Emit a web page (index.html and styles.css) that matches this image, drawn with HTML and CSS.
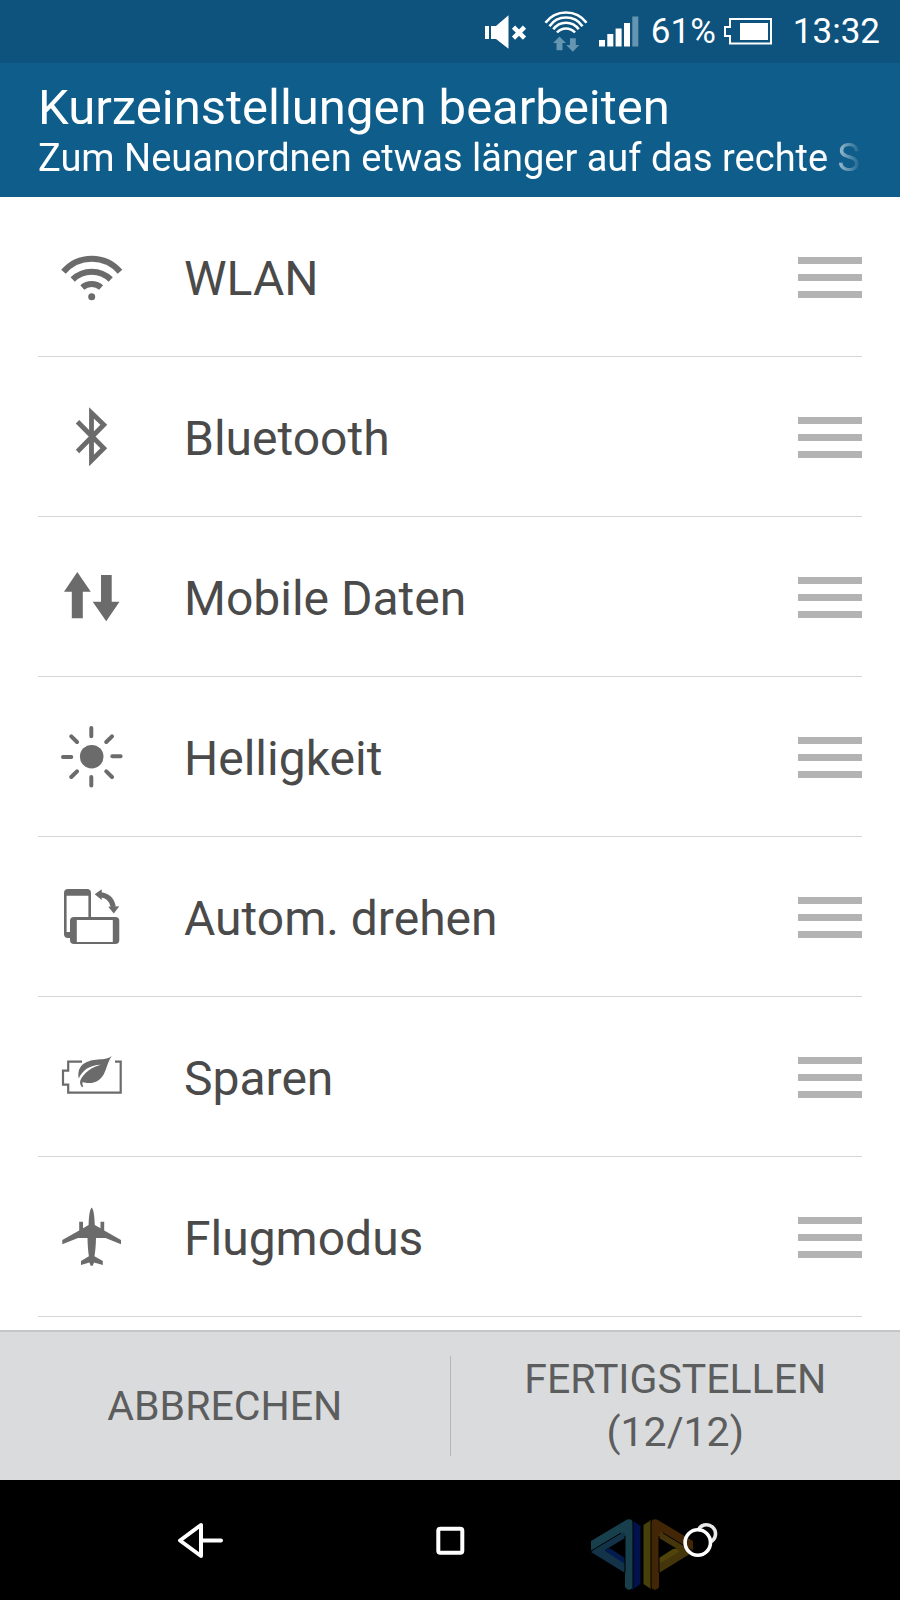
FILE: index.html
```html
<!DOCTYPE html>
<html lang="de">
<head>
<meta charset="utf-8">
<meta name="viewport" content="width=device-width, initial-scale=1">
<title>Kurzeinstellungen bearbeiten</title>
<link rel="stylesheet" href="styles.css">
</head>
<body>
<div class="screen">
  <div class="status">
    <svg class="status-mute" width="42" height="36" viewBox="0 0 42 36" aria-hidden="true">
      <path fill="#fff" d="M0 12h4v13H0zM6 12h5L23.500 1.300V34.700L11 25H6z"/>
      <path stroke="#fff" stroke-width="4.500" d="M28.500 13.200l11 11M39.500 13.200l-11 11"/>
    </svg>
    <svg class="status-wifi" width="44" height="43" viewBox="0 0 44 43" aria-hidden="true">
      <g fill="none" stroke="#fff" stroke-width="2.600">
        <path d="M1.500 12.800A25.500 25.500 0 0 1 42.500 12.800M5.500 16.200A20 20 0 0 1 38.500 16.200M9.300 19.300A15.500 15.500 0 0 1 34.700 19.300M13 22.500A12 12 0 0 1 31 22.500"/>
      </g>
      <path fill="#6595b0" d="M15.500 26.500L22 33h-3.500v7.200h-6V33H9zM26 28.300h5.800V35h3.500l-6.500 6.800L22.200 35H26z"/>
    </svg>
    <svg class="status-signal" width="40" height="31" viewBox="0 0 40 31" aria-hidden="true">
      <path fill="#fff" d="M0 24h6v6.500H0zM8.300 18h6v12.500h-6zM16.600 12.500h6v18h-6zM25 7h6v23.500h-6z"/>
      <path fill="#6595b0" d="M33.300 .5h6v30h-6z"/>
    </svg>
    <span class="status-level">61%</span>
    <svg class="status-battery" width="48" height="27" viewBox="0 0 48 27" aria-hidden="true">
      <path fill="none" stroke="#fff" stroke-width="2" d="M6 1h41v24.500H6v-7.500H1V9h5z"/>
      <path fill="#fff" d="M16 5h28v17H16z"/>
    </svg>
    <time class="status-time">13:32</time>
  </div>

  <header class="header">
    <h1 class="title">Kurzeinstellungen bearbeiten</h1>
    <p class="subtitle">Zum Neuanordnen etwas länger auf das rechte S</p>
  </header>

  <main class="content">
    <ul class="list">
      <li class="row">
        <svg class="icon" viewBox="0 0 64 64" aria-hidden="true">
          <path fill="none" stroke="#6b6b6b" stroke-width="6" d="M3.500 26.800A37 37 0 0 1 60 26.800M12.700 34.500A27 27 0 0 1 50.700 34.500M22.300 42.500A14.500 14.500 0 0 1 41.100 42.500"/>
          <circle cx="31.700" cy="51.700" r="3.500" fill="#6b6b6b"/>
        </svg>
        <span class="label">WLAN</span>
        <button class="handle" type="button" aria-label="WLAN verschieben"><span class="bar"></span><span class="bar"></span><span class="bar"></span></button>
      </li>
      <li class="row">
        <svg class="icon" viewBox="0 0 64 64" aria-hidden="true">
          <path fill="none" stroke="#6b6b6b" stroke-width="4.800" d="M17.500 16.800L43.800 43.200L31.500 55.500V8L43.800 19.800L17.500 46.500"/>
        </svg>
        <span class="label">Bluetooth</span>
        <button class="handle" type="button" aria-label="Bluetooth verschieben"><span class="bar"></span><span class="bar"></span><span class="bar"></span></button>
      </li>
      <li class="row">
        <svg class="icon" viewBox="0 0 64 64" aria-hidden="true">
          <path fill="#6b6b6b" d="M17.300 7L30.800 26.700h-8v26.600h-11V26.700H4zM41 10h10.700v26.700h7.800L46.200 56.200L32.700 36.700H41z"/>
        </svg>
        <span class="label">Mobile Daten</span>
        <button class="handle" type="button" aria-label="Mobile Daten verschieben"><span class="bar"></span><span class="bar"></span><span class="bar"></span></button>
      </li>
      <li class="row">
        <svg class="icon" viewBox="0 0 64 64" aria-hidden="true">
          <circle cx="31.700" cy="31.700" r="11.800" fill="#6b6b6b"/>
          <path stroke="#6b6b6b" stroke-width="4" stroke-linecap="round" d="M31.300 3v8.200M31.300 52v8.500M3 32h8.300M52.300 31.300h8.300M11.300 11.300l5.700 5.700M52 11.300l-5.700 5.700M11.300 52l5.700-5.700M52 52l-5.700-5.700"/>
        </svg>
        <span class="label">Helligkeit</span>
        <button class="handle" type="button" aria-label="Helligkeit verschieben"><span class="bar"></span><span class="bar"></span><span class="bar"></span></button>
      </li>
      <li class="row">
        <svg class="icon" viewBox="0 0 64 64" aria-hidden="true">
          <path fill="#6b6b6b" fill-rule="evenodd" d="M8 4h19a4 4 0 0 1 4 4v24.500h-2.600V10.700H6.600V47H10v6H8a4 4 0 0 1-4-4V8a4 4 0 0 1 4-4z"/>
          <path fill="#6b6b6b" fill-rule="evenodd" d="M14 32h41.300a4 4 0 0 1 4 4v19a4 4 0 0 1-4 4H14a4 4 0 0 1-4-4V36a4 4 0 0 1 4-4zM16.800 35v22h36V35z"/>
          <path fill="none" stroke="#6b6b6b" stroke-width="5" d="M40.500 9.700C48 10.500 52 14.500 53.300 22"/>
          <path fill="#6b6b6b" d="M34.700 9.300L41.700 4.200V15zM48.200 21.700L59.300 21.200L53.800 28.500z"/>
        </svg>
        <span class="label">Autom. drehen</span>
        <button class="handle" type="button" aria-label="Autom. drehen verschieben"><span class="bar"></span><span class="bar"></span><span class="bar"></span></button>
      </li>
      <li class="row">
        <svg class="icon" viewBox="0 0 64 64" aria-hidden="true">
          <path fill="none" stroke="#6b6b6b" stroke-width="2.200" d="M22 16.700H8.200V25.700H3V39.700H8.200V47.700H60.700V16.700H55"/>
          <path fill="#6b6b6b" d="M51.800 11C47 14.500 42 14 36 14.700C25 15.800 16.500 21 18.800 33.500C22 26 29 20 41 19.800C32 22 24 27.500 20.300 35.500C19.600 38 20.500 41 22.300 42.300L23.300 41.300C22.300 40 22.200 38.500 22.700 37C27 38.500 34 39 39.500 34.500C46.500 29 46 19 51.800 11z"/>
        </svg>
        <span class="label">Sparen</span>
        <button class="handle" type="button" aria-label="Sparen verschieben"><span class="bar"></span><span class="bar"></span><span class="bar"></span></button>
      </li>
      <li class="row">
        <svg class="icon" viewBox="0 0 64 64" aria-hidden="true">
          <path fill="#6b6b6b" d="M31.700 2.500C33.700 4.500 34.500 11 34.800 20L40.500 23.300V16.700H44.200V25.500L61 35V39.300L45.500 33H36C35.900 40 35.300 46 34.500 51.300L42.800 56V60L34 57.600L32.700 60.700H30.700L29.400 57.600L21 60V56L28.900 51.300C28.100 46 27.600 40 27.500 33H18L2.300 39.300V35L19.200 25.500V16.700H23V23.300L28.600 20C28.900 11 29.700 4.500 31.700 2.500z"/>
        </svg>
        <span class="label">Flugmodus</span>
        <button class="handle" type="button" aria-label="Flugmodus verschieben"><span class="bar"></span><span class="bar"></span><span class="bar"></span></button>
      </li>
    </ul>
  </main>

  <footer class="actions">
    <button class="action" type="button">ABBRECHEN</button>
    <span class="divider"></span>
    <button class="action" type="button">FERTIGSTELLEN (12/12)</button>
  </footer>

  <nav class="nav">
    <button class="nav-button" type="button" aria-label="Zurück">
      <svg width="48" height="40" viewBox="0 0 48 40" aria-hidden="true">
        <path fill="none" stroke="#fff" stroke-width="4" stroke-linecap="round" stroke-linejoin="round" d="M4 20.500L25 5V36zM25 20.500H45"/>
      </svg>
    </button>
    <button class="nav-button" type="button" aria-label="Startseite">
      <svg width="30" height="30" viewBox="0 0 30 30" aria-hidden="true">
        <rect x="3.300" y="3.700" width="24" height="24" rx="2" fill="none" stroke="#fff" stroke-width="4"/>
      </svg>
    </button>
    <button class="nav-button" type="button" aria-label="Letzte Apps">
      <svg class="recents" width="36" height="36" viewBox="0 0 36 36" aria-hidden="true">
        <path fill="none" stroke="#e8e8e8" stroke-width="3.600" d="M16 8.800A9 9 0 1 1 28.500 19.800"/>
        <circle cx="15.800" cy="20.500" r="12.700" fill="none" stroke="#fff" stroke-width="3.600"/>
      </svg>
    </button>
    <svg class="watermark" width="102" height="74" viewBox="0 0 102 74" aria-hidden="true">
      <path fill="#02124c" d="M42 3l7.500 5v58L41 72z"/>
      <path fill="#173f4c" d="M0 23L36 1.500Q42 0 42 6V69Q38 75 34 69V18L6 32L0 33z"/>
      <path fill="#123348" d="M0 34L30 15Q36 14 34 20L14 32L34 45V55z"/>
      <path fill="#041b50" d="M14 33Q16 29 20 31L34 40V46z"/>
      <path fill="#000" d="M22 31L34 23V40z"/>
      <path fill="#46400a" d="M60 2L52.500 7V66L60 71z"/>
      <path fill="#422606" d="M60 6Q60 0 66 1.500L102 23V33L96 32L68 18V69Q64 75 60 69z"/>
      <path fill="#44350b" d="M68 55V46L88 32L68 20Q68 13 73 15L102 34z"/>
      <path fill="#514408" d="M68 46V40L82 31Q88 29 88 34z"/>
      <path fill="#000" d="M68 23L80 31L68 39z"/>
      <path fill="none" stroke="#000" d="M42 3V70M60 3V70M0 33L30 15M102 33L72 15M34 18V55M68 18V55"/>
    </svg>
  </nav>
</div>
</body>
</html>
```
FILE: styles.css
```css
* {
  box-sizing: border-box;
}

body {
  margin: 0;
  font-family: Roboto, "Liberation Sans", sans-serif;
  background: #000;
}

button {
  margin: 0;
  padding: 0;
  border: 0;
  background: none;
  font: inherit;
  color: inherit;
}

.screen {
  display: flex;
  flex-direction: column;
  min-height: 100vh;
  background: #fff;
}

.status {
  display: flex;
  align-items: center;
  justify-content: flex-end;
  height: 63px;
  padding-right: 20px;
  background: #0e537d;
  color: #fff;
  font-size: 35px;
  line-height: 40px;
}

.status-mute {
  margin-right: 17px;
}

.status-wifi {
  margin-right: 11px;
}

.status-signal {
  margin-right: 12px;
}

.status-level {
  margin-right: 8px;
}

.status-battery {
  margin-right: 21px;
}

.header {
  padding: 17px 38px;
  background: #0e5d8a;
  color: #fff;
}

.title {
  margin: 0;
  font-size: 49px;
  font-weight: 400;
  line-height: 56px;
}

.subtitle {
  margin: 0;
  overflow: hidden;
  white-space: nowrap;
  font-size: 38px;
  line-height: 44px;
  mask-image: linear-gradient(to right, #000 calc(100% - 40px), transparent);
}

.content {
  flex: 1;
  padding: 0 38px;
}

.list {
  margin: 0;
  padding: 0;
  list-style: none;
}

.row {
  display: flex;
  align-items: center;
  height: 160px;
  padding-left: 22px;
  border-bottom: 1px solid #d6d6d6;
}

.icon {
  width: 64px;
  height: 64px;
  flex: none;
}

.label {
  flex: 1;
  padding: 5px 0 0 60px;
  color: #4a4a4a;
  font-size: 48px;
  line-height: 56px;
}

.handle {
  display: flex;
  flex-direction: column;
  gap: 10px;
  width: 64px;
  padding-top: 1px;
}

.bar {
  height: 7px;
  background: #b3b3b3;
}

.actions {
  display: flex;
  align-items: center;
  height: 150px;
  border-top: 2px solid #c4c6c7;
  background: #dadbdd;
  color: #5c5d5d;
}

.action {
  flex: 1;
  padding: 0 60px;
  font-size: 41px;
  line-height: 53px;
}

.divider {
  width: 1px;
  height: 100px;
  background: #b4b5b7;
}

.nav {
  position: relative;
  display: grid;
  grid-template-columns: repeat(3, 1fr);
  align-items: center;
  height: 120px;
  padding: 0 75px;
  background: #000;
}

.nav-button {
  display: flex;
  justify-content: center;
}

.recents {
  position: relative;
  z-index: 1;
}

.watermark {
  position: absolute;
  right: 207px;
  bottom: 8px;
}
```
